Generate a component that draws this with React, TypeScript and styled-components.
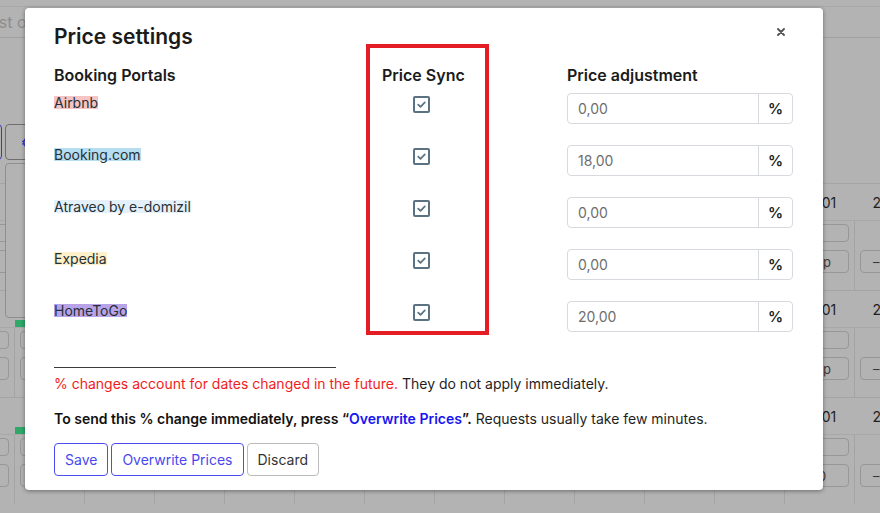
import React from "react";
import styled, { createGlobalStyle } from "styled-components";
import { Euro } from "lucide-react";

const GlobalStyle = createGlobalStyle`
  html, body { margin: 0; padding: 0; }
  body {
    background: #b3b3b3;
    font-family: Inter, "Noto Sans", "Liberation Sans", sans-serif;
    overflow: hidden;
  }
  * { box-sizing: border-box; }
`;

const Screen = styled.div`
  position: relative;
  width: 880px;
  height: 513px;
  overflow: hidden;
  background: #b3b3b3;
`;

/* ---------- dimmed application behind the dialog ---------- */

const AppBg = styled.div`
  display: flex;
  flex-direction: column;
  padding-top: 6px;
`;

const SearchBar = styled.div`
  height: 32px;
  border-top: 1px solid #a9a9a9;
  border-bottom: 1px solid #a0a0a0;
  display: flex;
  align-items: center;
  font-size: 16px;
  color: #8d8d8d;
`;

const SearchText = styled.span`
  margin-left: -32px;
  white-space: nowrap;
`;

const Toolbar = styled.div`
  margin-top: 86px;
  height: 36px;
  display: flex;
  gap: 3px;
  margin-left: -40px;
`;

const ToolButton = styled.div<{ $accent?: boolean }>`
  width: 42px;
  height: 36px;
  border: 1px solid ${(p) => (p.$accent ? "#3b3bc4" : "#6f6f6f")};
  border-radius: 4px;
  display: flex;
  align-items: center;
  padding-left: 14px;
  color: #3434c8;
`;

const Calendar = styled.div`
  margin-top: 23px;
  margin-left: -55px;
  display: flex;
  flex-direction: column;
`;

const Week = styled.div`
  height: 107px;
  border-top: 1px solid #a4a4a4;
  display: flex;
  flex-direction: column;
`;

const DayRow = styled.div`
  height: 36px;
  display: grid;
  grid-template-columns: repeat(14, 70px);
  position: relative;
`;

const DayLabel = styled.div`
  text-align: center;
  font-size: 14px;
  line-height: 20px;
  padding-top: 9px;
  color: #1f1f1f;
`;

const GreenBar = styled.div`
  position: absolute;
  left: 70px;
  bottom: 0;
  width: 300px;
  height: 7px;
  background: #2fa86a;
`;

const CellRow = styled.div`
  flex: 1;
  display: grid;
  grid-template-columns: repeat(14, 70px);
  border-top: 1px solid #a8a8a8;
`;

const Cell = styled.div`
  border-right: 1px solid #a4a4a4;
  padding: 3px 5px 0;
  display: flex;
  flex-direction: column;
  gap: 8px;
`;

const CellBox = styled.div<{ $h: number; $hidden?: boolean; $start?: boolean }>`
  height: ${(p) => p.$h}px;
  border: 1px solid ${(p) => (p.$hidden ? "transparent" : "#979797")};
  border-radius: 4px;
  font-size: 13px;
  color: #3a3a3a;
  display: flex;
  align-items: center;
  justify-content: ${(p) => (p.$start ? "flex-start" : "center")};
  padding-left: ${(p) => (p.$start ? "12px" : "0")};
`;

const DropPanel = styled.div`
  position: absolute;
  left: 5px;
  top: 163px;
  width: 220px;
  height: 155px;
  border: 1px solid #8f8f8f;
  border-radius: 4px;
  background: #b3b3b3;
`;

/* ---------- dialog ---------- */

const Modal = styled.div`
  position: absolute;
  left: 25px;
  top: 8px;
  width: 798px;
  background: #fff;
  border-radius: 4px;
  box-shadow: 0 1px 4px rgba(0, 0, 0, 0.4);
  padding: 15px 30px 14px 29px;
  display: flex;
  flex-direction: column;
  color: #1d1d1d;
`;

const HeaderRow = styled.div`
  display: flex;
  justify-content: space-between;
  align-items: flex-start;
`;

const Title = styled.h2`
  margin: 0;
  font-size: 21px;
  line-height: 28px;
  font-weight: 600;
  color: #1b1b1b;
`;

const CloseButton = styled.button`
  border: 0;
  background: none;
  padding: 0;
  margin: 5px 8px 0 0;
  width: 8px;
  height: 8px;
  display: flex;
  cursor: pointer;
`;

const Table = styled.div`
  margin-top: 14px;
  display: grid;
  grid-template-columns: 312px 123px 78px 226px;
  grid-template-rows: 28px repeat(5, 52px);
`;

const ColHead = styled.div<{ $col: number; $indent?: number }>`
  grid-column: ${(p) => p.$col};
  grid-row: 1;
  margin-left: ${(p) => p.$indent ?? 0}px;
  font-size: 16px;
  line-height: 21px;
  font-weight: 600;
  color: #1b1b1b;
  white-space: nowrap;
`;

const Frame = styled.div`
  grid-column: 2;
  grid-row: 1 / -1;
  margin: -21px 0 18px;
  border: 4px solid #e31d23;
  pointer-events: none;
`;

const PortalCell = styled.div<{ $row: number }>`
  grid-column: 1;
  grid-row: ${(p) => p.$row};
  font-size: 14px;
  line-height: 20px;
  color: #263036;
`;

const Highlight = styled.span<{ $bg: string }>`
  display: inline-block;
  line-height: 13px;
  background: ${(p) => p.$bg};
`;

const CheckCell = styled.div<{ $row: number }>`
  grid-column: 2;
  grid-row: ${(p) => p.$row};
  margin: 3px 0 0 47px;
`;

const CheckBox = styled.span`
  display: flex;
  width: 17px;
  height: 17px;
  border: 2px solid #5a7282;
  border-radius: 2px;
  align-items: center;
  justify-content: center;
  background: #fff;
`;

const InputGroup = styled.div<{ $row: number }>`
  grid-column: 4;
  grid-row: ${(p) => p.$row};
  height: 31px;
  display: flex;
  border: 1px solid #d6d9de;
  border-radius: 4px;
`;

const NumberField = styled.div`
  flex: 1;
  padding-left: 10px;
  display: flex;
  align-items: center;
  font-size: 14px;
  color: #6e6e6e;
`;

const Addon = styled.div`
  width: 34px;
  border-left: 1px solid #d6d9de;
  display: flex;
  align-items: center;
  justify-content: center;
  font-size: 15px;
  font-weight: 600;
  color: #222;
`;

const Divider = styled.div`
  margin-top: 14px;
  width: 282px;
  height: 1px;
  background: #3a3a3a;
`;

const Note = styled.p<{ $gap: number }>`
  margin: ${(p) => p.$gap}px 0 0;
  font-size: 14px;
  line-height: 20px;
  color: #1f1f1f;
  white-space: nowrap;
`;

const Warn = styled.span`
  color: #f21d1d;
`;

const Strong = styled.span`
  font-weight: 600;
  color: #111;
`;

const Link = styled.span`
  font-weight: 600;
  color: #1616f2;
`;

const Actions = styled.div`
  margin-top: 14px;
  display: flex;
  gap: 3px;
`;

const Button = styled.button<{ $primary?: boolean }>`
  height: 33px;
  padding: 0 10px;
  font-family: inherit;
  font-size: 14px;
  background: #fff;
  border-radius: 4px;
  border: 1px solid ${(p) => (p.$primary ? "#4d4df5" : "#bcbcbc")};
  color: ${(p) => (p.$primary ? "#4848ee" : "#333")};
  cursor: pointer;
`;

const portals = [
  { name: "Airbnb", bg: "#f6c4c4", value: "0,00" },
  { name: "Booking.com", bg: "#b6def0", value: "18,00" },
  { name: "Atraveo by e-domizil", bg: "#e4f0fa", value: "0,00" },
  { name: "Expedia", bg: "#fdf1cc", value: "0,00" },
  { name: "HomeToGo", bg: "#b9a3e8", value: "20,00" },
];

/* only the two right-most columns are visible past the dialog */
const dayLabels = [
  "", "", "", "", "", "", "", "", "", "", "", "", "12.01", "20.01",
];

const cellTexts = [
  { top: "", bottom: "Top" },
  { top: "", bottom: "Top" },
  { top: "2", bottom: "10" },
];

function CheckMark() {
  return (
    <svg width="11" height="11" viewBox="0 0 11 11" fill="none">
      <polyline
        points="2.2,5.6 4.5,7.8 8.8,3.4"
        stroke="#5a7282"
        strokeWidth="1.7"
        strokeLinecap="round"
        strokeLinejoin="round"
      />
    </svg>
  );
}

function Background() {
  return (
    <AppBg>
      <SearchBar>
        <SearchText>Guest or host</SearchText>
      </SearchBar>
      <Toolbar>
        <ToolButton $accent />
        <ToolButton>
          <Euro size={15} strokeWidth={2} />
        </ToolButton>
      </Toolbar>
      <Calendar>
        {cellTexts.map((t, w) => (
          <Week key={w}>
            <DayRow>
              {dayLabels.map((d, i) => (
                <DayLabel key={i}>{d}</DayLabel>
              ))}
              <GreenBar />
            </DayRow>
            <CellRow>
              {dayLabels.map((_, i) => {
                const visible = i >= 12;
                return (
                  <Cell key={i}>
                    <CellBox $h={18} $hidden={i === 13}>
                      {visible && i === 12 ? t.top : ""}
                    </CellBox>
                    <CellBox $h={23} $start={i === 13}>
                      {i === 13 ? "–" : visible ? t.bottom : ""}
                    </CellBox>
                  </Cell>
                );
              })}
            </CellRow>
          </Week>
        ))}
      </Calendar>
      <DropPanel />
    </AppBg>
  );
}

export default function App() {
  return (
    <>
      <GlobalStyle />
      <Screen>
        <Background />
        <Modal role="dialog" aria-label="Price settings">
          <HeaderRow>
            <Title>Price settings</Title>
            <CloseButton aria-label="Close">
              <svg width="8" height="8" viewBox="0 0 8 8">
                <path
                  d="M1 1 L7 7 M7 1 L1 7"
                  stroke="#555"
                  strokeWidth="1.9"
                  strokeLinecap="round"
                />
              </svg>
            </CloseButton>
          </HeaderRow>

          <Table>
            <ColHead $col={1}>Booking Portals</ColHead>
            <ColHead $col={2} $indent={16}>
              Price Sync
            </ColHead>
            <ColHead $col={4}>Price adjustment</ColHead>
            {portals.map((p, i) => (
              <React.Fragment key={p.name}>
                <PortalCell $row={i + 2}>
                  <Highlight $bg={p.bg}>{p.name}</Highlight>
                </PortalCell>
                <CheckCell $row={i + 2}>
                  <CheckBox role="checkbox" aria-checked="true">
                    <CheckMark />
                  </CheckBox>
                </CheckCell>
                <InputGroup $row={i + 2}>
                  <NumberField>{p.value}</NumberField>
                  <Addon>%</Addon>
                </InputGroup>
              </React.Fragment>
            ))}
            <Frame />
          </Table>

          <Divider />
          <Note $gap={6}>
            <Warn>% changes account for dates changed in the future.</Warn> They do
            not apply immediately.
          </Note>
          <Note $gap={15}>
            <Strong>To send this % change immediately, press “</Strong>
            <Link>Overwrite Prices</Link>
            <Strong>”.</Strong> Requests usually take few minutes.
          </Note>

          <Actions>
            <Button $primary>Save</Button>
            <Button $primary>Overwrite Prices</Button>
            <Button>Discard</Button>
          </Actions>
        </Modal>
      </Screen>
    </>
  );
}
